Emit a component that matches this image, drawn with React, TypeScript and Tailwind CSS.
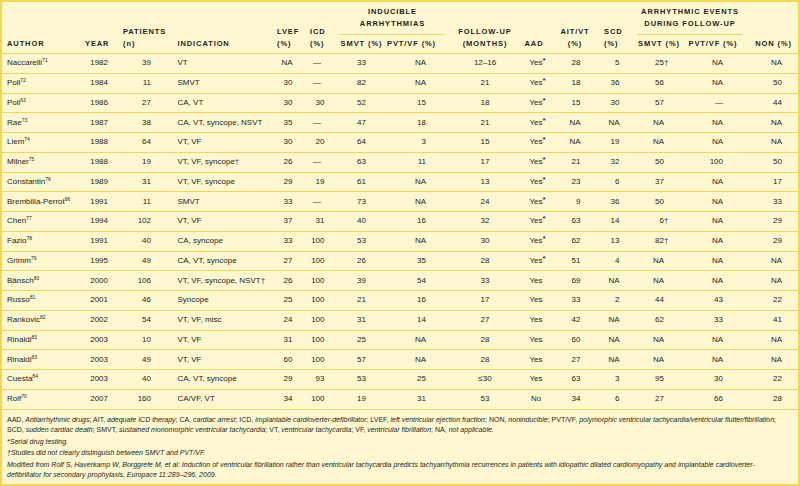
import React from 'react'

type Row = {
  author: string
  ref: string
  year: string
  n: string
  indication: string
  lvef: string
  icd: string
  smvtI: string
  pvtI: string
  follow: string
  aad: string
  ait: string
  scd: string
  smvtE: string
  pvtE: string
  non: string
}

const rows: Row[] = [
  { author: 'Naccarelli', ref: '71', year: '1982', n: '39', indication: 'VT', lvef: 'NA', icd: '—', smvtI: '33', pvtI: 'NA', follow: '12–16', aad: 'Yes*', ait: '28', scd: '5', smvtE: '25†', pvtE: 'NA', non: 'NA' },
  { author: 'Poll', ref: '72', year: '1984', n: '11', indication: 'SMVT', lvef: '30', icd: '—', smvtI: '82', pvtI: 'NA', follow: '21', aad: 'Yes*', ait: '18', scd: '36', smvtE: '56', pvtE: 'NA', non: '50' },
  { author: 'Poll', ref: '63', year: '1986', n: '27', indication: 'CA, VT', lvef: '30', icd: '30', smvtI: '52', pvtI: '15', follow: '18', aad: 'Yes*', ait: '15', scd: '30', smvtE: '57', pvtE: '—', non: '44' },
  { author: 'Rae', ref: '73', year: '1987', n: '38', indication: 'CA, VT, syncope, NSVT', lvef: '35', icd: '—', smvtI: '47', pvtI: '18', follow: '21', aad: 'Yes*', ait: 'NA', scd: 'NA', smvtE: 'NA', pvtE: 'NA', non: 'NA' },
  { author: 'Liem', ref: '74', year: '1988', n: '64', indication: 'VT, VF', lvef: '30', icd: '20', smvtI: '64', pvtI: '3', follow: '15', aad: 'Yes*', ait: 'NA', scd: '19', smvtE: 'NA', pvtE: 'NA', non: 'NA' },
  { author: 'Milner', ref: '75', year: '1988', n: '19', indication: 'VT, VF, syncope†', lvef: '26', icd: '—', smvtI: '63', pvtI: '11', follow: '17', aad: 'Yes*', ait: '21', scd: '32', smvtE: '50', pvtE: '100', non: '50' },
  { author: 'Constantin', ref: '76', year: '1989', n: '31', indication: 'VT, VF, syncope', lvef: '29', icd: '19', smvtI: '61', pvtI: 'NA', follow: '13', aad: 'Yes*', ait: '23', scd: '6', smvtE: '37', pvtE: 'NA', non: '17' },
  { author: 'Brembilla-Perrot', ref: '66', year: '1991', n: '11', indication: 'SMVT', lvef: '33', icd: '—', smvtI: '73', pvtI: 'NA', follow: '24', aad: 'Yes*', ait: '9', scd: '36', smvtE: '50', pvtE: 'NA', non: '33' },
  { author: 'Chen', ref: '77', year: '1994', n: '102', indication: 'VT, VF', lvef: '37', icd: '31', smvtI: '40', pvtI: '16', follow: '32', aad: 'Yes*', ait: '63', scd: '14', smvtE: '6†', pvtE: 'NA', non: '29' },
  { author: 'Fazio', ref: '78', year: '1991', n: '40', indication: 'CA, syncope', lvef: '33', icd: '100', smvtI: '53', pvtI: 'NA', follow: '30', aad: 'Yes*', ait: '62', scd: '13', smvtE: '82†', pvtE: 'NA', non: '29' },
  { author: 'Grimm', ref: '79', year: '1995', n: '49', indication: 'CA, VT, syncope', lvef: '27', icd: '100', smvtI: '26', pvtI: '35', follow: '28', aad: 'Yes*', ait: '51', scd: '4', smvtE: 'NA', pvtE: 'NA', non: 'NA' },
  { author: 'Bänsch', ref: '80', year: '2000', n: '106', indication: 'VT, VF, syncope, NSVT†', lvef: '26', icd: '100', smvtI: '39', pvtI: '54', follow: '33', aad: 'Yes', ait: '69', scd: 'NA', smvtE: 'NA', pvtE: 'NA', non: 'NA' },
  { author: 'Russo', ref: '81', year: '2001', n: '46', indication: 'Syncope', lvef: '25', icd: '100', smvtI: '21', pvtI: '16', follow: '17', aad: 'Yes', ait: '33', scd: '2', smvtE: '44', pvtE: '43', non: '22' },
  { author: 'Rankovic', ref: '82', year: '2002', n: '54', indication: 'VT, VF, misc', lvef: '24', icd: '100', smvtI: '31', pvtI: '14', follow: '27', aad: 'Yes', ait: '42', scd: 'NA', smvtE: '62', pvtE: '33', non: '41' },
  { author: 'Rinaldi', ref: '83', year: '2003', n: '10', indication: 'VT, VF', lvef: '31', icd: '100', smvtI: '25', pvtI: 'NA', follow: '28', aad: 'Yes', ait: '60', scd: 'NA', smvtE: 'NA', pvtE: 'NA', non: 'NA' },
  { author: 'Rinaldi', ref: '83', year: '2003', n: '49', indication: 'VT, VF', lvef: '60', icd: '100', smvtI: '57', pvtI: 'NA', follow: '28', aad: 'Yes', ait: '27', scd: 'NA', smvtE: 'NA', pvtE: 'NA', non: 'NA' },
  { author: 'Cuesta', ref: '84', year: '2003', n: '40', indication: 'CA, VT, syncope', lvef: '29', icd: '93', smvtI: '53', pvtI: '25', follow: '≤30', aad: 'Yes', ait: '63', scd: '3', smvtE: '95', pvtE: '30', non: '22' },
  { author: 'Rolf', ref: '70', year: '2007', n: '160', indication: 'CA/VF, VT', lvef: '34', icd: '100', smvtI: '19', pvtI: '31', follow: '53', aad: 'No', ait: '34', scd: '6', smvtE: '27', pvtE: '66', non: '28' },
]

// blue footnote marks (* and †)
function Marked({ text }: { text: string }) {
  if (text.endsWith('†')) {
    return (
      <span className="relative">
        {text.slice(0, -1)}
        <span className="absolute left-full text-[#2e3192]">†</span>
      </span>
    )
  }
  if (text.endsWith('*')) {
    return (
      <span className="relative">
        {text.slice(0, -1)}
        <span className="absolute left-full -top-[1px] font-bold text-[#2e3192]">*</span>
      </span>
    )
  }
  return <>{text}</>
}

function Abbr({ k, v, last }: { k: string; v: string; last?: boolean }) {
  return (
    <>
      {k}, <i>{v}</i>
      {last ? '' : '; '}
    </>
  )
}

export default function App() {
  return (
    <div
      className="w-[800px] h-[486px] overflow-hidden bg-[#fff7cf] border-2 border-[#f6d84e] text-[#231f20]"
      style={{ fontFamily: '"Liberation Sans", Arial, sans-serif' }}
    >
      {/* Header */}
      <div className="flex h-[52px] items-end border-b border-[#f6d84e] text-[7.5px] font-bold tracking-[0.9px] leading-[12px] whitespace-nowrap">
        <div className="w-[83px] pl-[5px] pb-[3px]">AUTHOR</div>
        <div className="w-[30px] pr-[6px] pb-[3px] text-right">YEAR</div>
        <div className="w-[55px] pl-[8px] pb-[3px]">
          PATIENTS
          <br />
          (n)
        </div>
        <div className="w-[100px] pl-[7.5px] pb-[3px]">INDICATION</div>
        <div className="w-[32px] pl-[7px] pb-[3px]">
          LVEF
          <br />
          (%)
        </div>
        <div className="w-[31px] pl-[8px] pb-[3px]">
          ICD
          <br />
          (%)
        </div>
        <div className="w-[119px] flex flex-col pb-[3px]">
          <div className="text-center">
            INDUCIBLE
            <br />
            ARRHYTHMIAS
          </div>
          <div className="mt-[4px] ml-[6px] mr-[8px] h-px bg-[#f6d84e]" />
          <div className="mt-[3px] flex">
            <div className="w-[53px] pl-[4px] text-center">SMVT (%)</div>
            <div className="w-[66px] pl-[1px]">PVT/VF (%)</div>
          </div>
        </div>
        <div className="w-[66px] pb-[3px] text-center">
          FOLLOW-UP
          <br />
          (MONTHS)
        </div>
        <div className="w-[36px] pr-[4px] pb-[3px] text-center">AAD</div>
        <div className="w-[38px] pl-[4px] pb-[3px] text-center">
          AIT/VT
          <br />
          (%)
        </div>
        <div className="w-[38px] pl-[12px] pb-[3px]">
          SCD
          <br />
          (%)
        </div>
        <div className="w-[113px] flex flex-col pb-[3px]">
          <div className="pl-[7px] text-center">
            ARRHYTHMIC EVENTS
            <br />
            DURING FOLLOW-UP
          </div>
          <div className="mt-[4px] ml-[7px] mr-[1px] h-px bg-[#f6d84e]" />
          <div className="mt-[3px] flex">
            <div className="w-[55px] pl-[3px] text-center">SMVT (%)</div>
            <div className="w-[58px] pr-[2px] text-center">PVT/VF (%)</div>
          </div>
        </div>
        <div className="w-[55px] pl-[6px] pb-[3px] text-center">NON (%)</div>
      </div>

      {/* Rows */}
      {rows.map((r, i) => (
        <div
          key={i}
          className="flex h-[19.75px] items-center border-b border-[#f6d84e] text-[8px] leading-none whitespace-nowrap"
        >
          <div className="w-[83px] pl-[5px]">
            {r.author}
            <sup className="text-[5px] -top-[3px]">{r.ref}</sup>
          </div>
          <div className="w-[30px] pr-[7px] text-right">{r.year}</div>
          <div className="w-[55px] pr-[19px] text-right">{r.n}</div>
          <div className="w-[100px] pl-[7.5px]">
            <Marked text={r.indication} />
          </div>
          <div className="w-[32px] pr-[9.5px] text-right">{r.lvef}</div>
          <div className={r.icd === '—' ? 'w-[31px] pr-[12px] text-right' : 'w-[31px] pr-[8.5px] text-right'}>
            {r.icd}
          </div>
          <div className="w-[53px] pl-[4px] text-center">{r.smvtI}</div>
          <div className="w-[66px] pr-[26px] text-right">{r.pvtI}</div>
          <div className="w-[66px] text-center">{r.follow}</div>
          <div className="w-[36px] text-center">
            <Marked text={r.aad} />
          </div>
          <div className="w-[38px] pr-[11.5px] text-right">{r.ait}</div>
          <div className="w-[38px] pr-[10.5px] text-right">{r.scd}</div>
          <div className="w-[55px] pr-[21px] text-right">
            <Marked text={r.smvtE} />
          </div>
          <div className="w-[58px] pr-[20px] text-right">{r.pvtE}</div>
          <div className="w-[55px] pr-[16px] text-right">{r.non}</div>
        </div>
      ))}

      {/* Footnotes */}
      <div className="flex flex-col gap-[1px] pl-[5px] pt-[5px] text-[7px] leading-[10.5px] whitespace-nowrap">
        <p>
          <Abbr k="AAD" v="Antiarrhythmic drugs" />
          <Abbr k="AIT" v="adequate ICD therapy" />
          <Abbr k="CA" v="cardiac arrest" />
          <Abbr k="ICD" v="implantable cardioverter-defibrillator" />
          <Abbr k="LVEF" v="left ventricular ejection fraction" />
          <Abbr k="NON" v="noninducible" />
          <Abbr k="PVT/VF" v="polymorphic ventricular tachycardia/ventricular flutter/fibrillation" />
          <br />
          <Abbr k="SCD" v="sudden cardiac death" />
          <Abbr k="SMVT" v="sustained monomorphic ventricular tachycardia" />
          <Abbr k="VT" v="ventricular tachycardia" />
          <Abbr k="VF" v="ventricular fibrillation" />
          NA, <i>not applicable.</i>
        </p>
        <p className="italic">*Serial drug testing.</p>
        <p className="italic">†Studies did not clearly distinguish between SMVT and PVT/VF.</p>
        <p className="italic">
          Modified from Rolf S, Haverkamp W, Borggrefe M, et al: Induction of ventricular fibrillation rather than
          ventricular tachycardia predicts tachyarrhythmia recurrences in patients with idiopathic dilated
          cardiomyopathy and implantable cardioverter-
          <br />
          defibrillator for secondary prophylaxis, Europace 11:289–296, 2009.
        </p>
      </div>
    </div>
  )
}
